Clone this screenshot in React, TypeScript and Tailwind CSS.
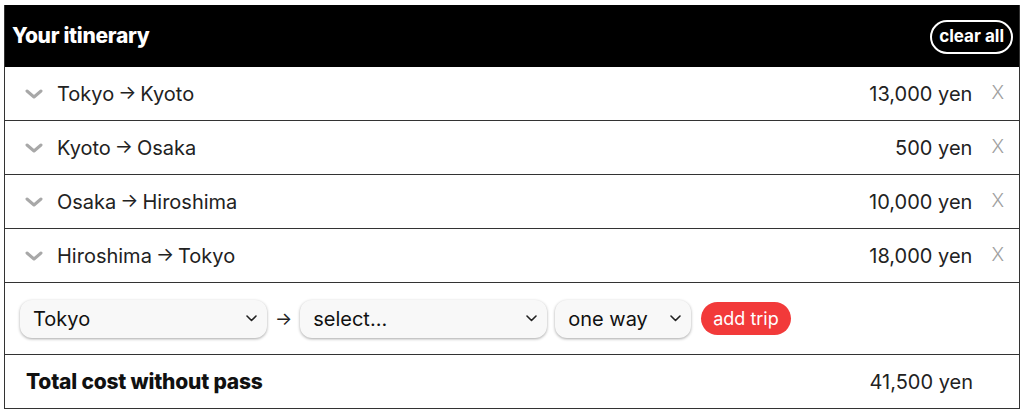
import React from "react";

const trips = [
  { from: "Tokyo", to: "Kyoto", price: "13,000 yen" },
  { from: "Kyoto", to: "Osaka", price: "500 yen" },
  { from: "Osaka", to: "Hiroshima", price: "10,000 yen" },
  { from: "Hiroshima", to: "Tokyo", price: "18,000 yen" },
];

function Chevron() {
  return (
    <svg width="18" height="10" viewBox="0 0 18 10" className="shrink-0">
      <path d="M2 2 L9 8 L16 2" fill="none" stroke="#a8a8a8" strokeWidth="3" strokeLinecap="round" strokeLinejoin="round" />
    </svg>
  );
}

function SmallChevron() {
  return (
    <svg width="11" height="7" viewBox="0 0 11 7">
      <path d="M1 1 L5.5 5.5 L10 1" fill="none" stroke="#222" strokeWidth="1.6" strokeLinecap="round" strokeLinejoin="round" />
    </svg>
  );
}

function Select({ label, width }: { label: string; width: string }) {
  return (
    <div
      className={`${width} h-[38px] rounded-[12px] bg-[#f8f8f8] shadow-[0_1px_3px_rgba(0,0,0,0.35)] flex items-center justify-between pl-[13px] pr-[10px] text-[20px] text-[#111]`}
    >
      <span>{label}</span>
      <SmallChevron />
    </div>
  );
}

export default function App() {
  return (
    <div className="w-[1024px] h-[414px] bg-white pt-[5px] px-[4px] font-['Inter',sans-serif] overflow-hidden">
      <div className="w-[1016px] border-x-[1.5px] border-[#333]">
        <div className="h-[62px] bg-black flex items-center justify-between pl-[7px] pr-[6px]">
          <span className="text-white text-[21px] font-extrabold tracking-[-0.3px]">Your itinerary</span>
          <span className="text-white text-[17px] font-bold border-2 border-white rounded-full px-[7px] h-[34px] flex items-center mt-[2px]">clear all</span>
        </div>
        {trips.map((t) => (
          <div key={t.from + t.to} className="h-[54px] border-b-[1.5px] border-[#333] flex items-center pl-[20px] pr-[15px] text-[20px] text-[#222]">
            <Chevron />
            <span className="ml-[14px] flex items-center">
              {t.from}
              <span className="text-[19px] mx-[4px]">→</span>
              {t.to}
            </span>
            <span className="ml-auto">{t.price}</span>
            <span className="ml-[19px] text-[#a0a0a0] text-[19px] font-light">X</span>
          </div>
        ))}
        <div className="h-[72px] border-b-[1.5px] border-[#333] flex items-center pl-[15px] gap-[8px]">
          <Select label="Tokyo" width="w-[247px]" />
          <span className="text-[18px] text-[#222]">→</span>
          <Select label="select..." width="w-[247px]" />
          <Select label="one way" width="w-[136px]" />
          <button className="ml-[2px] h-[33px] px-[12px] rounded-full bg-[#f23a3a] text-white text-[18px]">add trip</button>
        </div>
        <div className="h-[54px] border-b-[1.5px] border-[#333] flex items-center pl-[21px] pr-[46px] text-[20px] text-[#111]">
          <span className="font-extrabold text-[21px] tracking-[-0.2px]">Total cost without pass</span>
          <span className="ml-auto text-[#222]">41,500 yen</span>
        </div>
      </div>
    </div>
  );
}
